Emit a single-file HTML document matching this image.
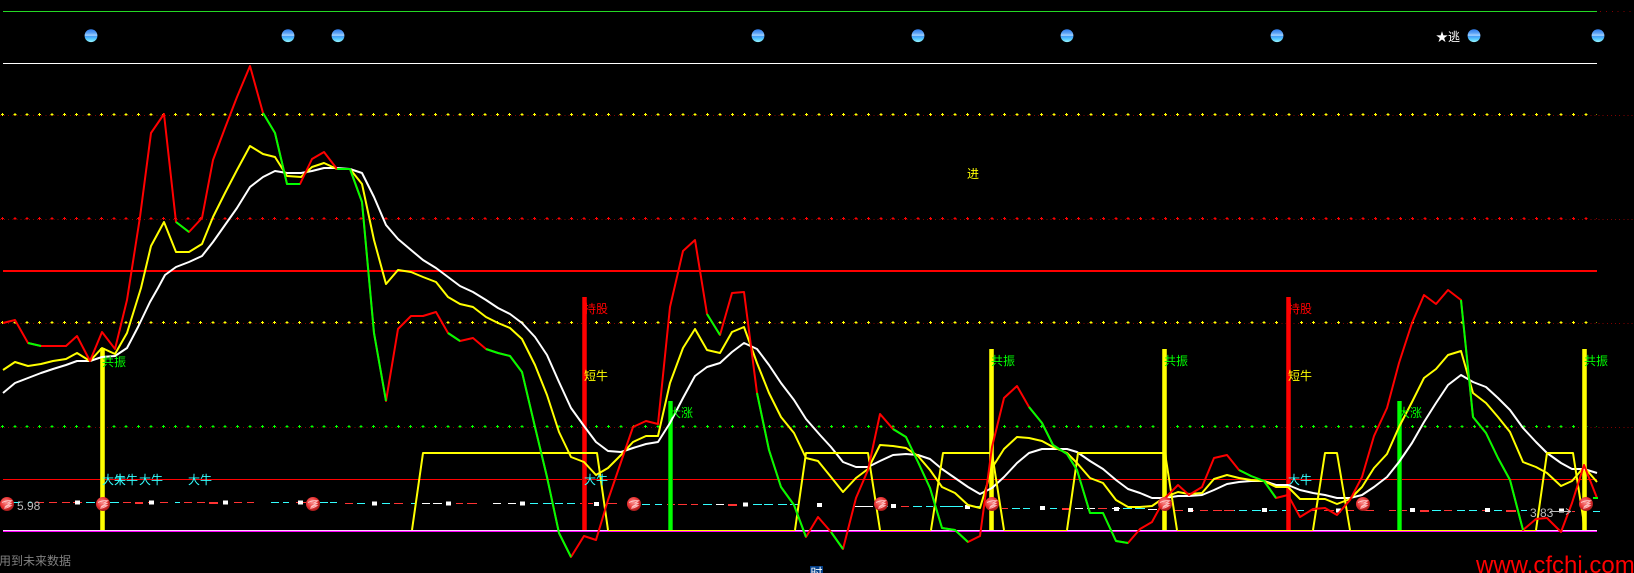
<!DOCTYPE html>
<html>
<head>
<meta charset="utf-8">
<style>
html,body{margin:0;padding:0;background:#000;width:1634px;height:573px;overflow:hidden}
svg{display:block;position:absolute;left:0;top:0}
text{font-family:"WenQuanYi Zen Hei","Noto Sans CJK SC",sans-serif;font-size:12px}
.n{font-family:"Liberation Sans",sans-serif}
.l{fill:none;stroke-width:2;stroke-linejoin:round;stroke-linecap:butt}
.c{shape-rendering:crispEdges}
</style>
</head>
<body>
<svg width="1634" height="573" viewBox="0 0 1634 573" xmlns="http://www.w3.org/2000/svg">
<defs>
<linearGradient id="bb" x1="0" y1="0" x2="0" y2="1">
<stop offset="0" stop-color="#2f7cec"/><stop offset="0.3" stop-color="#5ea4f6"/><stop offset="0.48" stop-color="#a8d4ff"/><stop offset="0.55" stop-color="#3f9cf8"/><stop offset="0.8" stop-color="#5cd0fc"/><stop offset="1" stop-color="#9cf4ff"/>
</linearGradient>
<radialGradient id="rb" cx="0.42" cy="0.38" r="0.7">
<stop offset="0" stop-color="#f89090"/><stop offset="0.55" stop-color="#e83030"/><stop offset="1" stop-color="#8a1414"/>
</radialGradient>
<g id="blue"><circle r="6.4" fill="url(#bb)"/></g>
<g id="red"><circle r="7" fill="url(#rb)"/><path d="M-5,-1.5 Q0,-4 4.5,-3.2 L1,-1 L4.5,-.6 Q0,1 -2,3 L2,1.6 L4,1.6 Q0,4.5 -3,4" fill="none" stroke="#ffe0e0" stroke-width="1" opacity=".8"/></g>
</defs>

<!-- horizontal levels -->
<g class="c" fill="none">
<path d="M3 11.5H1597" stroke="#24d824"/>
<path d="M1600 11.5H1634" stroke="#800000" stroke-dasharray="1 4.9"/>
<path d="M3 63.5H1597" stroke="#fff"/>
<path d="M3 271H1597" stroke="#f00" stroke-width="2"/>
<path d="M3 479.5H1597" stroke="#f00"/>
<path d="M3 531.5H1597" stroke="#f0f"/>
<path d="M3 530.5H1597" stroke="#ffd0ff"/>

<path d="M0 115.5H1634M0 219.5H1634M0 323.5H1634M0 427.5H1634" stroke="#800000" stroke-dasharray="1 3.12"/>

<path d="M1 114.5H1597" stroke="#ff0" stroke-dasharray="3 9.37"/>
<path d="M2 114.5H1597" stroke="#ff0" stroke-width="3" stroke-dasharray="1 11.37"/>
<path d="M1 218.5H1597" stroke="#f00" stroke-dasharray="3 9.37"/>
<path d="M2 218.5H1597" stroke="#f00" stroke-width="3" stroke-dasharray="1 11.37"/>
<path d="M1 322.5H1597" stroke="#ff0" stroke-dasharray="3 9.37"/>
<path d="M2 322.5H1597" stroke="#ff0" stroke-width="3" stroke-dasharray="1 11.37"/>
<path d="M1 426.5H1597" stroke="#0f0" stroke-dasharray="3 9.37"/>
<path d="M2 426.5H1597" stroke="#0f0" stroke-width="3" stroke-dasharray="1 11.37"/>
</g>

<!-- dashed price line -->
<g class="c" fill="none" stroke-width="1">
<path stroke="#3ff" d="M13 502.5H20M28 502.5H32M86 502.5H95M110 502.5H119M175 502.5H180M271 502.5H279M283 502.5H289M320 502.5H328M330 502.5H337M357 503.5H365M382 503.5H390M411 503.5H416M530 503.5H538M543 503.5H552M555 503.5H563M567 503.5H575M642 504.5H650M655 504.5H662M703 504.5H712M753 504.5H762M764 504.5H773M778 504.5H787M790 504.5H798M880 506.5H888M913 506.5H922M926 506.5H933M940 506.5H963M972 506.5H980M1012 508.5H1020M1023 508.5H1030M1050 508.5H1057M1123 508.5H1132M1135 508.5H1145M1227 510.5H1235M1239 510.5H1247M1252 510.5H1261M1269 510.5H1277M1282 510.5H1286M1297 510.5H1304M1432 510.5H1441M1457 510.5H1465M1469 510.5H1477M1494 510.5H1502M1521 510.5H1527M1593 511.5H1600"/>
<path stroke="#f33" d="M36 502.5H44M49 502.5H57M62 502.5H70M73 502.5H82M123 502.5H131M135 502.5H143M148 502.5H152M160 502.5H168M184 502.5H192M197 502.5H205M209 502.5H218M234 502.5H242M247 502.5H254M296 502.5H306M345 503.5H353M394 503.5H403M456 503.5H463M467 503.5H477M580 503.5H584M588 503.5H593M607 503.5H617M667 504.5H675M678 504.5H687M691 504.5H698M728 504.5H737M901 506.5H909M1002 508.5H1008M1062 508.5H1070M1098 508.5H1107M1175 510.5H1183M1188 510.5H1194M1200 510.5H1208M1213 510.5H1222M1224 510.5H1234M1311 510.5H1317M1324 510.5H1334M1346 510.5H1354M1364 510.5H1374M1389 510.5H1396M1401 510.5H1407M1420 510.5H1429M1444 510.5H1452M1482 510.5H1490M1506 510.5H1516M1572 511.5H1575"/>
<path stroke="#f33" stroke-width="2" d="M135 503H143M209 503H218M728 505H737M1062 509H1070M1420 511H1429M1506 511H1516"/>
<path stroke="#fff" d="M422 503.5H430M433 503.5H442M493 503.5H501M508 503.5H516M716 504.5H724M855 506.5H873M1075 508.5H1083M1087 508.5H1095M1112 508.5H1120M1148 509.5H1157"/>
<path stroke="#fff" stroke-width="4" d="M75 502.5h5M149 502.5h5M223 502.5h5M298 502.5h5M372 503.5h5M446 503.5h5M520 503.5h5M594 504h5M743 504.5h5M817 505h5M891 506h5M965 507h5M1040 508h5M1114 509h5M1188 510h5M1262 510h5M1336 510.5h5M1410 510h5M1485 510h5M1559 510.5h5"/>
</g>

<!-- vertical bars -->
<g class="c">
<g fill="#c8c800">
<rect x="100" y="348" width="5" height="182"/><rect x="989" y="349" width="5" height="181"/><rect x="1162" y="349" width="5" height="181"/><rect x="1582" y="349" width="5" height="181"/>
</g>
<g fill="#ff0">
<rect x="101" y="348" width="3" height="182"/><rect x="990" y="349" width="3" height="181"/><rect x="1163" y="349" width="3" height="181"/><rect x="1583" y="349" width="3" height="181"/>
</g>
<g fill="#c00000"><rect x="582" y="297" width="5" height="233"/><rect x="1286" y="297" width="5" height="233"/></g>
<g fill="#f00"><rect x="583" y="297" width="3" height="233"/><rect x="1287" y="297" width="3" height="233"/></g>
<g fill="#00b000"><rect x="668" y="401" width="5" height="129"/><rect x="1397" y="401" width="5" height="129"/></g>
<g fill="#0f0"><rect x="669" y="401" width="3" height="129"/><rect x="1398" y="401" width="3" height="129"/></g>
</g>

<!-- white MA -->
<polyline class="l" stroke="#fff" points="3,393 15,383 28,378 41,373 53,369 66,365 77,361 90,361 102,357 115,356 127,348 138,327 150,302 158,288 165,275 176,267 189,262 202,256 213,242 225,225 237,208 250,187 263,177 275,171 287,173 301,173 312,171 324,168 337,168 350,169 362,173 374,197 386,225 398,239 411,250 423,260 436,268 448,277 460,286 473,292 486,300 498,308 510,314 522,323 535,337 547,355 559,382 571,408 584,426 596,442 608,451 621,452 633,448 646,444 658,442 670,423 683,398 695,376 707,367 720,363 732,352 744,343 757,349 769,365 781,383 794,400 806,419 820,435 831,447 843,462 856,467 868,467 880,461 893,455 906,454 918,455 930,459 942,469 955,478 968,487 980,494 992,488 1004,477 1017,463 1029,453 1042,449 1053,449 1067,449 1077,452 1090,461 1103,469 1116,480 1128,489 1140,493 1152,498 1165,498 1178,496 1189,496 1202,495 1214,490 1227,484 1239,482 1251,481 1264,481 1276,485 1288,485 1300,490 1313,493 1325,495 1337,498 1350,498 1362,495 1374,487 1387,477 1399,462 1412,443 1424,422 1436,403 1448,385 1461,375 1473,382 1486,387 1498,398 1510,410 1523,428 1536,442 1547,453 1561,463 1572,469 1584,469 1597,473"/>

<!-- yellow trapezoid -->
<g class="l" stroke="#ff0">
<polyline points="412,530 423,453 597,453 608,530"/>
<polyline points="795,530 806,453 868,453 880,530"/>
<polyline points="931,530 943,453 992,453 1004,530"/>
<polyline points="1067,530 1078,453 1165,453 1177,530"/>
<polyline points="1313,530 1325,453 1337,453 1350,530"/>
<polyline points="1536,530 1547,453 1573,453 1585,530"/>
</g>
<path class="c" fill="none" stroke="#ff0" d="M608 530.5H795M880 530.5H931M1004 530.5H1067M1177 530.5H1313M1350 530.5H1536"/>

<!-- yellow MA -->
<polyline class="l" stroke="#ff0" points="3,370 15,362 28,366 41,364 53,361 66,359 77,353 90,361 102,348 115,354 127,333 141,288 151,246 164,222 176,252 189,252 202,244 213,217 225,193 237,170 250,146 263,154 275,157 287,176 301,177 312,167 324,163 337,169 350,169 362,184 374,240 386,284 398,270 411,272 423,277 436,282 448,297 460,304 473,307 486,317 498,323 510,328 522,339 535,365 547,395 559,432 571,457 584,462 596,475 608,468 621,455 633,442 646,436 658,436 670,383 683,348 695,329 707,350 720,353 732,332 744,327 757,363 769,393 781,417 794,433 806,458 818,461 831,477 843,492 856,478 868,469 880,445 893,446 906,448 918,456 930,470 942,487 955,493 968,505 980,508 992,468 1004,449 1017,437 1029,438 1042,441 1053,447 1067,453 1077,463 1090,478 1103,483 1116,500 1128,507 1140,507 1152,506 1165,497 1178,492 1189,494 1202,493 1214,479 1227,475 1239,478 1251,480 1264,481 1276,487 1288,487 1300,499 1313,499 1325,499 1337,504 1350,499 1362,487 1374,468 1387,454 1399,427 1412,402 1424,378 1436,369 1448,355 1461,351 1473,393 1486,403 1498,417 1510,432 1523,462 1536,467 1547,473 1561,486 1572,481 1584,467 1597,482"/>

<!-- red line -->
<polyline class="l" stroke="#f00" points="3,323 15,320 28,343 41,346 53,346 66,346 77,336 90,361 102,332 115,349 127,300 140,217 151,133 164,114 176,222 189,232 202,218 213,160 225,128 237,97 250,66 263,113 275,133 287,184 300,184 312,159 324,152 337,169 350,169 362,202 374,333 386,401 398,329 411,316 423,316 436,312 448,333 460,341 473,338 486,349 498,353 510,356 522,372 535,427 547,477 559,533 571,557 584,536 596,540 608,500 621,462 633,427 646,421 658,424 670,307 683,251 695,240 707,314 720,335 732,293 744,292 757,393 769,450 781,487 794,505 806,537 818,517 831,532 843,549 856,498 868,470 880,414 893,429 906,437 918,462 930,488 942,528 955,530 968,542 980,536 992,447 1004,398 1017,386 1029,407 1042,423 1053,445 1067,454 1077,470 1090,513 1103,513 1116,541 1128,543 1140,529 1152,522 1165,498 1178,485 1189,495 1202,487 1214,458 1227,455 1239,470 1251,476 1264,481 1276,498 1288,495 1300,517 1313,509 1325,508 1337,515 1350,500 1362,477 1374,436 1387,408 1399,363 1412,323 1424,295 1436,304 1448,290 1461,300 1473,417 1486,433 1498,458 1510,480 1523,530 1536,519 1547,518 1561,532 1572,503 1584,465 1597,498"/>

<!-- green segments -->
<g class="l" stroke="#0f0">
<polyline points="28,343 41,346"/>
<polyline points="176,222 189,232"/>
<polyline points="263,113 275,133 287,184 300,184"/>
<polyline points="337,169 350,169 362,202 374,333 386,401"/>
<polyline points="448,333 460,341"/>
<polyline points="486,349 498,353 510,356 522,372 535,427 547,477 559,533 571,557"/>
<polyline points="707,314 720,335"/>
<polyline points="757,393 769,450 781,487 794,505 806,537"/>
<polyline points="831,532 843,549"/>
<polyline points="893,429 906,437 918,462 930,488 942,528 955,530 968,542"/>
<polyline points="1029,407 1042,423 1053,445 1067,454 1077,470 1090,513 1103,513 1116,541 1128,543"/>
<polyline points="1239,470 1251,476 1264,481 1276,498"/>
<polyline points="1461,300 1473,417 1486,433 1498,458 1510,480 1523,530"/>
<polyline points="1593,498 1598,498"/>
</g>

<!-- labels -->
<text x="102" y="366" fill="#0f0">共振</text>
<text x="991" y="365" fill="#0f0">共振</text>
<text x="1164" y="365" fill="#0f0">共振</text>
<text x="1584" y="365" fill="#0f0">共振</text>
<text x="102" y="484" fill="#3ff">大牛</text>
<text x="114" y="484" fill="#3ff">大牛</text>
<text x="139" y="484" fill="#3ff">大牛</text>
<text x="188" y="484" fill="#3ff">大牛</text>
<text x="584" y="484" fill="#3ff">大牛</text>
<text x="1288" y="484" fill="#3ff">大牛</text>
<text x="584" y="313" fill="#f00">持股</text>
<text x="1288" y="313" fill="#f00">持股</text>
<text x="584" y="380" fill="#ff0">短牛</text>
<text x="1288" y="380" fill="#ff0">短牛</text>
<text x="669" y="417" fill="#0f0">大涨</text>
<text x="1398" y="417" fill="#0f0">大涨</text>
<text x="967" y="178" fill="#ff0">进</text>
<text x="1436" y="41" fill="#fff">★</text>
<text x="1448" y="41" fill="#fff">逃</text>

<!-- balls -->
<use href="#blue" x="91" y="35.7"/><use href="#blue" x="288" y="35.7"/><use href="#blue" x="338" y="35.7"/>
<use href="#blue" x="758" y="35.7"/><use href="#blue" x="918" y="35.7"/><use href="#blue" x="1067" y="35.7"/>
<use href="#blue" x="1277" y="35.7"/><use href="#blue" x="1474" y="35.7"/><use href="#blue" x="1598" y="35.7"/>
<use href="#red" x="7" y="504"/><use href="#red" x="103" y="504"/><use href="#red" x="313" y="504"/>
<use href="#red" x="634" y="504"/><use href="#red" x="881" y="504"/><use href="#red" x="992" y="504"/>
<use href="#red" x="1165" y="504"/><use href="#red" x="1363" y="504"/><use href="#red" x="1586" y="504"/>

<!-- small texts -->
<text class="n" x="17" y="510" fill="#bbb">5.98</text>
<text class="n" x="1530" y="517" fill="#bbb">3.83</text>
<path d="M1550 511.5H1570M1566 508.5L1570.5 511.5L1566 514.5" fill="none" stroke="#bbb" stroke-width="1"/>
<text x="-1" y="565" fill="#808080">用到未来数据</text>
<rect x="810" y="566" width="13" height="7" fill="#04408a"/>
<text x="810.5" y="577" fill="#fff">时</text>
<text class="n" x="1476" y="573" fill="#f00" style="font-size:24px;font-family:'Liberation Sans',sans-serif">www.cfchi.com</text>
</svg>
</body>
</html>
